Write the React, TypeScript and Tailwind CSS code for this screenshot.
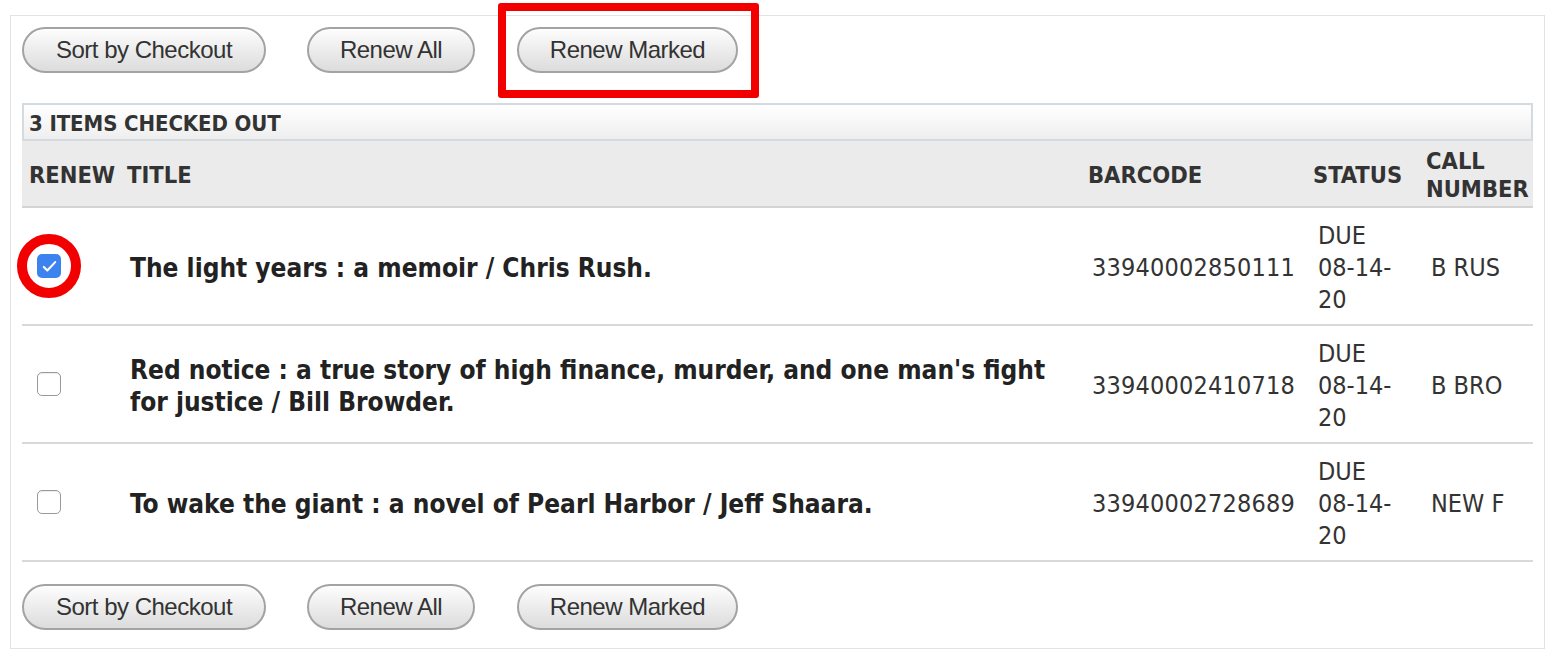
const items = [
  {
    id: 1,
    title: "The light years : a memoir / Chris Rush.",
    barcode: "33940002850111",
    call: "B RUS",
    checked: true,
  },
  {
    id: 2,
    title:
      "Red notice : a true story of high finance, murder, and one man's fight for justice / Bill Browder.",
    barcode: "33940002410718",
    call: "B BRO",
    checked: false,
  },
  {
    id: 3,
    title: "To wake the giant : a novel of Pearl Harbor / Jeff Shaara.",
    barcode: "33940002728689",
    call: "NEW F",
    checked: false,
  },
];

const font = "font-['DejaVu_Sans_Condensed','DejaVu_Sans',sans-serif]";

const PillButton = ({ label, width }: { label: string; width: string }) => (
  <button
    className={`${width} h-[46px] rounded-[23px] border-2 border-[#a3a3a3] bg-gradient-to-b from-[#fdfdfd] to-[#dcdcdc] text-[24px] text-[#333] font-['Liberation_Sans',Arial,sans-serif] tracking-[-0.5px] shadow-[inset_0_1px_0_#fff]`}
  >
    {label}
  </button>
);

const ButtonRow = ({ marked }: { marked?: boolean }) => (
  <div className="flex items-center">
    <PillButton label="Sort by Checkout" width="w-[244px]" />
    <div className="ml-[41px]">
      <PillButton label="Renew All" width="w-[168px]" />
    </div>
    <div className="relative ml-[42px]">
      <PillButton label="Renew Marked" width="w-[221px]" />
      {marked && (
        <span className="pointer-events-none absolute left-[-19px] right-[-21px] top-[-24px] bottom-[-25px] rounded-[3px] border-[8px] border-[#f20000]" />
      )}
    </div>
  </div>
);

const Checkbox = ({ checked }: { checked: boolean }) =>
  checked ? (
    <span className="flex h-[24px] w-[24px] items-center justify-center rounded-[5px] bg-[#3d83f0]">
      <svg viewBox="0 0 24 24" className="h-[21px] w-[21px]" fill="none">
        <path
          d="M5.5 12.5l4 4L18.5 7"
          stroke="#fff"
          strokeWidth="2.4"
          strokeLinecap="round"
          strokeLinejoin="round"
        />
      </svg>
    </span>
  ) : (
    <span className="block h-[24px] w-[24px] rounded-[5px] border border-[#9a9a9a] bg-white shadow-[inset_0_1px_1px_rgba(0,0,0,0.08)]" />
  );

export default function App() {
  return (
    <div className={`min-h-[662px] bg-white pt-[15px] pl-[10px] pr-[9px] ${font}`}>
      <div className="border border-[#e3e3e3] px-[11px] pt-[11px] pb-[18px]">
        <ButtonRow marked />

        <div className="mt-[30px] h-[38px] border-2 border-[#d3dbe1] bg-gradient-to-b from-white to-[#eeeeee] px-[5px] text-[22px] font-bold leading-[38px] text-[#333] tracking-[-0.1px]">
          3 ITEMS CHECKED OUT
        </div>

        <table className="w-full table-fixed border-collapse text-[#333]">
          <colgroup>
            <col className="w-[100px]" />
            <col />
            <col className="w-[225px]" />
            <col className="w-[113px]" />
            <col className="w-[110px]" />
          </colgroup>
          <thead>
            <tr className="h-[66px] border-b-2 border-[#d4d4d4] bg-[#ebebeb] text-left text-[23.5px] font-bold leading-[28px]">
              <th className="px-[7px] pt-[2px]">RENEW</th>
              <th className="px-[5px] pt-[2px]">TITLE</th>
              <th className="px-[3px] pt-[2px]">BARCODE</th>
              <th className="px-[3px] pt-[2px]">STATUS</th>
              <th className="px-[3px] pt-[2px]">
                CALL
                <br />
                NUMBER
              </th>
            </tr>
          </thead>
          <tbody>
            {items.map((it) => (
              <tr
                key={it.id}
                className="h-[118px] border-b-2 border-[#d9d9d9] text-[25px] leading-[32px]"
              >
                <td className="pl-[15px]">
                  <div className="relative h-[24px] w-[24px]">
                    <Checkbox checked={it.checked} />
                    {it.checked && (
                      <span className="pointer-events-none absolute left-[-20px] top-[-20px] h-[64px] w-[64px] rounded-full border-[10px] border-[#f20000]" />
                    )}
                  </div>
                </td>
                <td className="px-[8px] pt-[3px] text-[26px] font-bold text-[#222]">{it.title}</td>
                <td className="px-[7px] pt-[3px] tracking-[0.2px]">{it.barcode}</td>
                <td className="px-[8px] pt-[3px]">
                  DUE
                  <br />
                  08-14-
                  <br />
                  20
                </td>
                <td className="px-[8px] pt-[3px]">{it.call}</td>
              </tr>
            ))}
          </tbody>
        </table>

        <div className="mt-[22px]">
          <ButtonRow />
        </div>
      </div>
    </div>
  );
}
